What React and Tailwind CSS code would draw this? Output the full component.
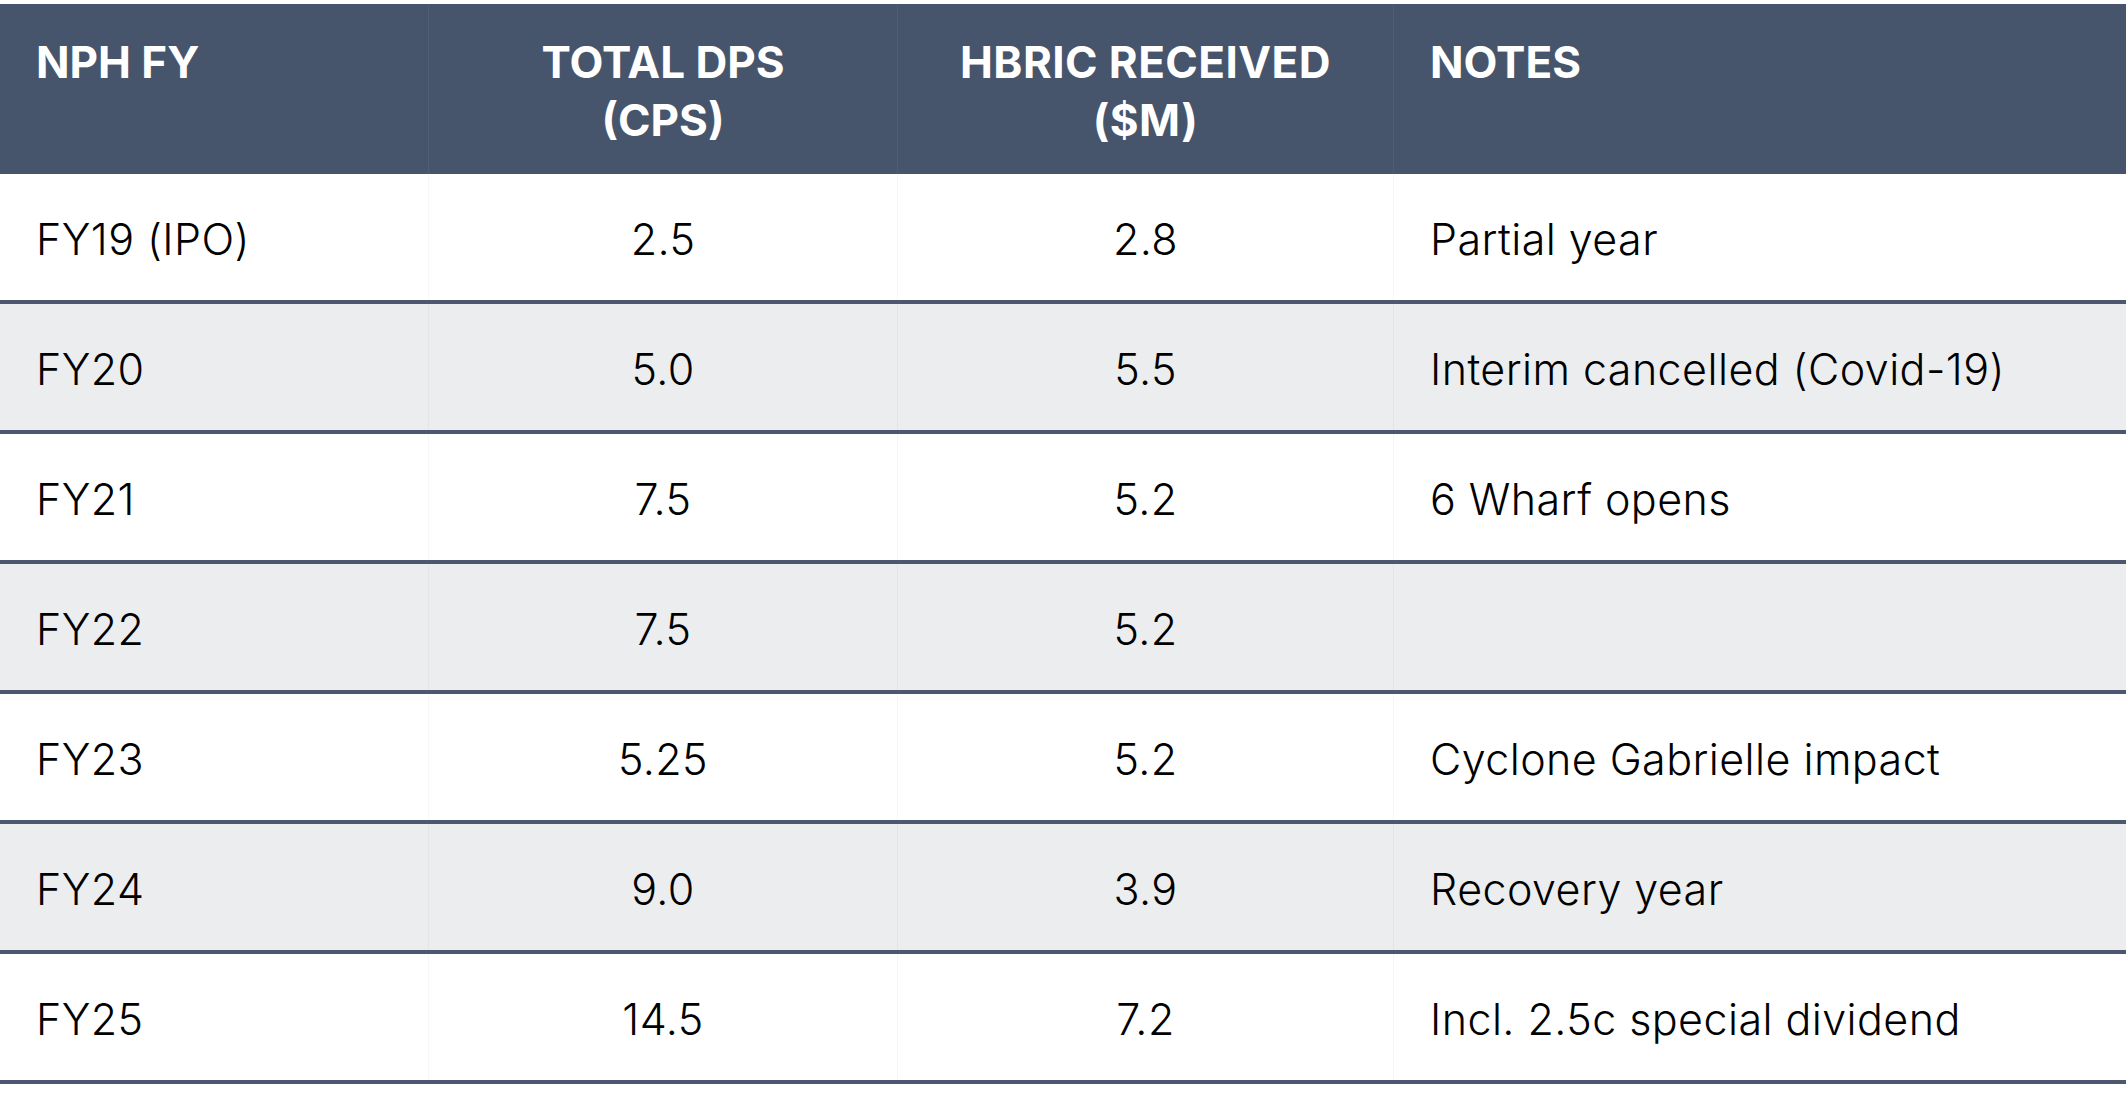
import React from "react";

const rows = [
  { fy: "FY19 (IPO)", dps: "2.5", hbric: "2.8", note: "Partial year" },
  { fy: "FY20", dps: "5.0", hbric: "5.5", note: "Interim cancelled (Covid-19)" },
  { fy: "FY21", dps: "7.5", hbric: "5.2", note: "6 Wharf opens" },
  { fy: "FY22", dps: "7.5", hbric: "5.2", note: "" },
  { fy: "FY23", dps: "5.25", hbric: "5.2", note: "Cyclone Gabrielle impact" },
  { fy: "FY24", dps: "9.0", hbric: "3.9", note: "Recovery year" },
  { fy: "FY25", dps: "14.5", hbric: "7.2", note: "Incl. 2.5c special dividend" },
];

const cols = "grid grid-cols-[428px_469px_496px_1fr]";

export default function App() {
  return (
    <div
      className="min-h-screen bg-white pt-1 text-black"
      style={{ fontFamily: "Inter, 'Noto Sans', sans-serif" }}
    >
      <div className={`${cols} h-[170px] bg-[#46556c] text-[44px] font-bold leading-[58px] text-white`}>
        <div className="pt-[29px] pl-9">NPH FY</div>
        <div className="border-l border-white/5 pt-[29px] text-center">
          TOTAL DPS
          <br />
          (CPS)
        </div>
        <div className="border-l border-white/5 pt-[29px] text-center tracking-[0.01em]">
          HBRIC RECEIVED
          <br />
          ($M)
        </div>
        <div className="border-l border-white/5 pt-[29px] pl-9">NOTES</div>
      </div>

      {rows.map((r, i) => (
        <div
          key={r.fy}
          className={`${cols} h-[130px] border-b-4 border-[#4b5870] text-[43px] font-[350] leading-none tracking-[0.01em] ${
            i % 2 === 1 ? "bg-[#ecedef]" : "bg-white"
          }`}
        >
          <div className="flex items-center pl-9 pt-1">{r.fy}</div>
          <div className="flex items-center justify-center border-l border-black/[0.03] pt-1">{r.dps}</div>
          <div className="flex items-center justify-center border-l border-black/[0.03] pt-1">{r.hbric}</div>
          <div className="flex items-center border-l border-black/[0.03] pl-9 pt-1">{r.note}</div>
        </div>
      ))}
    </div>
  );
}
